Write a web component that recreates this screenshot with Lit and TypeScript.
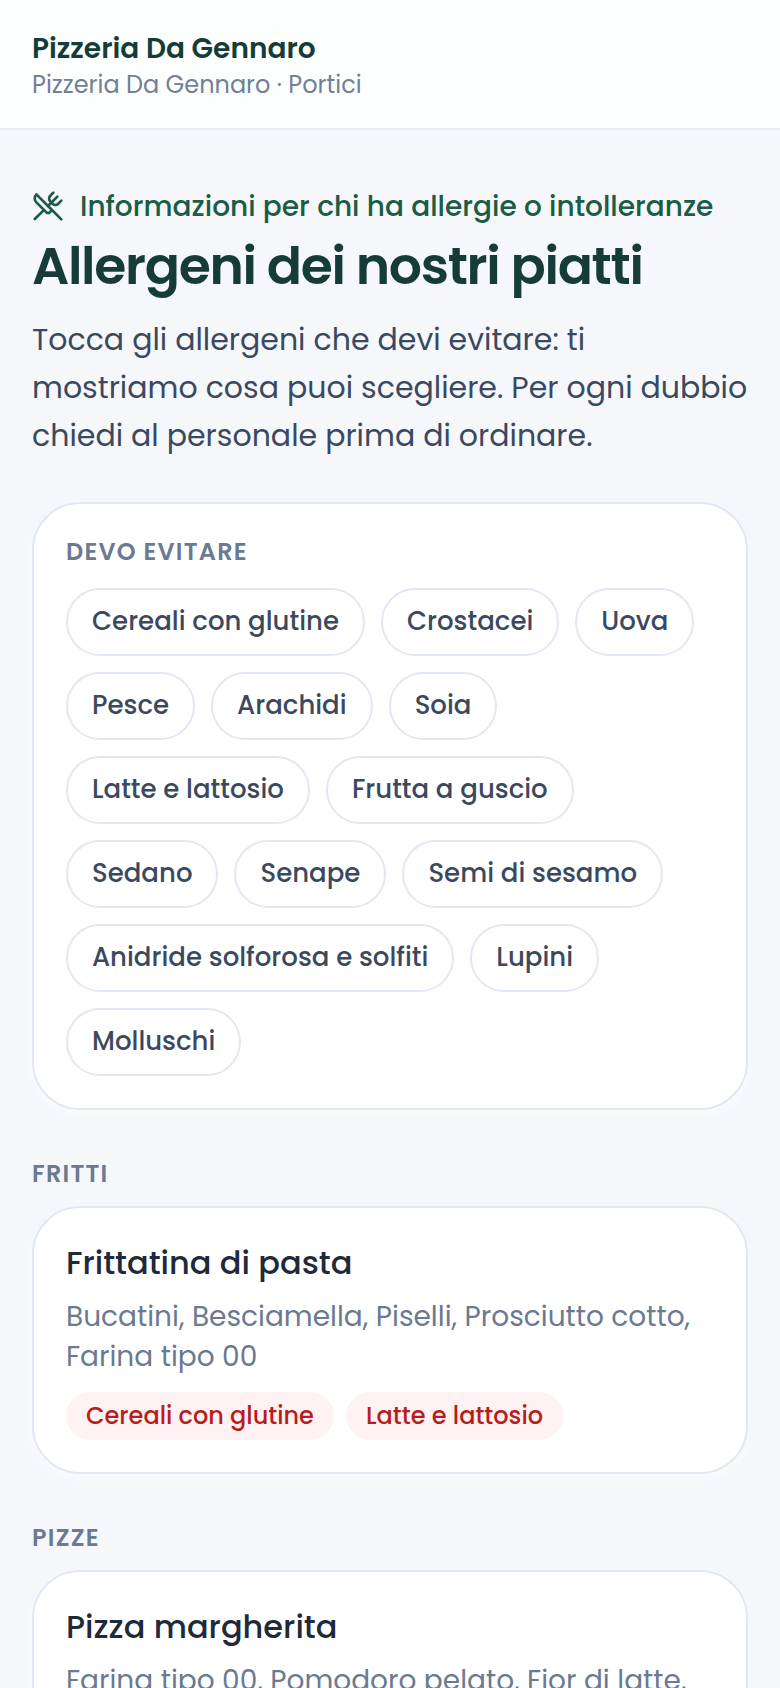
import { LitElement, html, css, svg } from "lit";
import { customElement, property, state } from "lit/decorators.js";
import { classMap } from "lit/directives/class-map.js";

interface Dish {
  name: string;
  ingredients: string;
  allergens: string[];
}

interface Section {
  title: string;
  dishes: Dish[];
}

const ALLERGENS = [
  "Cereali con glutine",
  "Crostacei",
  "Uova",
  "Pesce",
  "Arachidi",
  "Soia",
  "Latte e lattosio",
  "Frutta a guscio",
  "Sedano",
  "Senape",
  "Semi di sesamo",
  "Anidride solforosa e solfiti",
  "Lupini",
  "Molluschi",
];

const MENU: Section[] = [
  {
    title: "Fritti",
    dishes: [
      {
        name: "Frittatina di pasta",
        ingredients: "Bucatini, Besciamella, Piselli, Prosciutto cotto, Farina tipo 00",
        allergens: ["Cereali con glutine", "Latte e lattosio"],
      },
    ],
  },
  {
    title: "Pizze",
    dishes: [
      {
        name: "Pizza margherita",
        ingredients: "Farina tipo 00, Pomodoro pelato, Fior di latte,",
        allergens: [],
      },
    ],
  },
];

const utensilsCrossed = svg`
  <path d="m16 2-2.3 2.3a3 3 0 0 0 0 4.2l1.8 1.8a3 3 0 0 0 4.2 0L22 8" />
  <path d="M15 15 3.3 3.3a4.2 4.2 0 0 0 0 6l7.3 7.3c.7.7 2 .7 2.8 0L15 15Zm0 0 7 7" />
  <path d="m2.1 21.8 6.4-6.3" />
  <path d="m19 5-7 7" />
`;

@customElement("dish-card")
export class DishCard extends LitElement {
  @property({ attribute: false }) dish!: Dish;

  static styles = css`
    :host {
      display: block;
    }
    .card {
      padding: 32px;
      border: 2px solid #e2e8f3;
      border-radius: 48px;
      background: #fff;
      box-shadow: 0 4px 12px rgba(255, 255, 255, 0.6);
    }
    .name {
      margin: 0 0 11px;
      font-size: 32px;
      line-height: 46px;
      font-weight: 500;
      color: #1e293b;
    }
    .ingredients {
      margin: 0;
      font-size: 28px;
      line-height: 40px;
      color: #6b7a92;
    }
    .tags {
      display: flex;
      flex-wrap: wrap;
      gap: 12px;
      margin: 15px 0 0;
      padding: 0;
      list-style: none;
    }
    .tag {
      padding: 0 20px;
      border-radius: 24px;
      background: #fef2f2;
      color: #b91c1c;
      font-size: 24px;
      line-height: 48px;
      font-weight: 500;
    }
  `;

  render() {
    const { name, ingredients, allergens } = this.dish;
    return html`
      <article class="card">
        <h3 class="name">${name}</h3>
        <p class="ingredients">${ingredients}</p>
        ${allergens.length
          ? html`<ul class="tags">
              ${allergens.map((a) => html`<li class="tag">${a}</li>`)}
            </ul>`
          : null}
      </article>
    `;
  }
}

@customElement("app-root")
export class AppRoot extends LitElement {
  @state() private avoided: string[] = [];

  static styles = css`
    :host {
      display: block;
      min-height: 100vh;
      background: #f5f7fb;
      font-family: Poppins, Inter, sans-serif;
    }
    .header {
      padding: 29px 32px 27px;
      border-bottom: 2px solid #e8eef5;
      background: #fdfffe;
    }
    .brand {
      margin: 0;
      font-size: 28px;
      line-height: 40px;
      font-weight: 600;
      color: #163c38;
    }
    .place {
      margin: 0;
      font-size: 24px;
      line-height: 32px;
      color: #718096;
    }
    .main {
      padding: 56px 32px;
    }
    .eyebrow {
      display: flex;
      align-items: flex-start;
      gap: 16px;
      margin: 0 0 8px;
      font-size: 28px;
      line-height: 42px;
      font-weight: 500;
      color: #1a5c45;
    }
    .icon {
      flex: none;
      width: 32px;
      height: 32px;
      margin-top: 4px;
      fill: none;
      stroke: currentColor;
      stroke-width: 2;
      stroke-linecap: round;
      stroke-linejoin: round;
    }
    .title {
      margin: 0 0 20px;
      font-size: 52px;
      line-height: 60px;
      font-weight: 600;
      letter-spacing: -0.025em;
      color: #163c38;
    }
    .intro {
      margin: 0 0 42px;
      font-size: 30px;
      line-height: 48px;
      color: #3b4960;
    }
    .filter {
      padding: 32px;
      border: 2px solid #e2e8f3;
      border-radius: 48px;
      background: #fff;
      box-shadow: 0 4px 12px rgba(255, 255, 255, 0.6);
    }
    .label {
      margin: 0;
      font-size: 24px;
      line-height: 32px;
      font-weight: 600;
      letter-spacing: 0.05em;
      text-transform: uppercase;
      color: #6b7a92;
    }
    .chips {
      display: flex;
      flex-wrap: wrap;
      gap: 16px;
      margin-top: 20px;
    }
    .chip {
      padding: 0 24px 2px;
      border: 2px solid #e2e8f3;
      border-radius: 34px;
      background: #fff;
      color: #3b4960;
      font: inherit;
      font-size: 26px;
      line-height: 62px;
      font-weight: 500;
      cursor: pointer;
    }
    .chip.on {
      border-color: #b91c1c;
      background: #fef2f2;
      color: #b91c1c;
    }
    .section {
      display: grid;
      gap: 16px;
      margin-top: 48px;
    }
  `;

  private toggle(name: string) {
    this.avoided = this.avoided.includes(name)
      ? this.avoided.filter((a) => a !== name)
      : [...this.avoided, name];
  }

  render() {
    return html`
      <header class="header">
        <p class="brand">Pizzeria Da Gennaro</p>
        <p class="place">Pizzeria Da Gennaro · Portici</p>
      </header>
      <main class="main">
        <p class="eyebrow">
          <svg class="icon" viewBox="0 0 24 24" aria-hidden="true">${utensilsCrossed}</svg>
          <span>Informazioni per chi ha allergie o intolleranze</span>
        </p>
        <h1 class="title">Allergeni dei nostri piatti</h1>
        <p class="intro">
          Tocca gli allergeni che devi evitare: ti mostriamo cosa puoi scegliere. Per ogni dubbio
          chiedi al personale prima di ordinare.
        </p>
        <section class="filter" aria-labelledby="filter-label">
          <h2 class="label" id="filter-label">Devo evitare</h2>
          <div class="chips">
            ${ALLERGENS.map((name) => {
              const on = this.avoided.includes(name);
              return html`<button
                type="button"
                class=${classMap({ chip: true, on })}
                aria-pressed=${on ? "true" : "false"}
                @click=${() => this.toggle(name)}
              >${name}</button>`;
            })}
          </div>
        </section>
        ${MENU.map(
          (section) => html`
            <section class="section">
              <h2 class="label">${section.title}</h2>
              ${section.dishes.map((dish) => html`<dish-card .dish=${dish}></dish-card>`)}
            </section>
          `,
        )}
      </main>
    `;
  }
}
